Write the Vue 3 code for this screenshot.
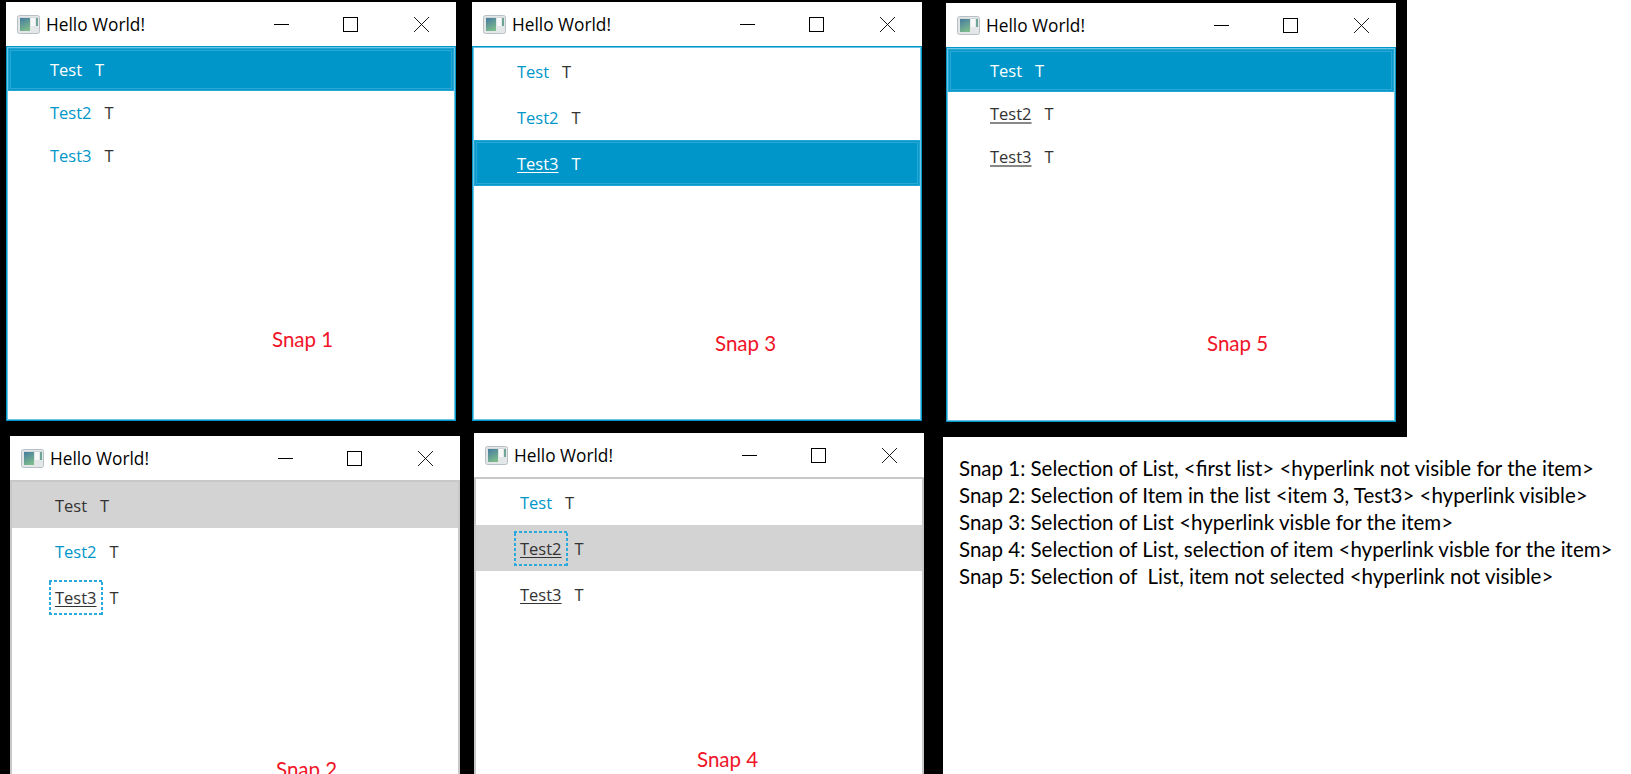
<template>
  <div class="page">
    <div class="corner"></div>

    <div
      v-for="win in windows"
      :key="win.snap"
      class="window"
      :style="{ left: win.x + 'px', top: win.y + 'px', height: win.h + 'px' }"
    >
      <div class="titlebar">
        <svg class="app-icon" width="23" height="19" viewBox="0 0 23 19">
          <defs>
            <linearGradient :id="'g' + win.snap" x1="0.2" y1="0" x2="0.6" y2="1">
              <stop offset="0" stop-color="#4a7f9f" />
              <stop offset="1" stop-color="#7dbb8c" />
            </linearGradient>
          </defs>
          <rect x="0.5" y="0.5" width="22" height="18" rx="2" fill="#e4e7e8" stroke="#b8c0c6" />
          <rect x="2" y="2" width="19" height="1" fill="#d3d8da" />
          <rect x="3" y="3" width="10" height="13" :fill="'url(#g' + win.snap + ')'" />
          <rect x="14" y="3" width="4" height="8" fill="#f7f8f8" />
          <rect x="19" y="3" width="2" height="8" fill="#6ea596" />
        </svg>
        <span class="title">Hello World!</span>
        <div class="controls">
          <span class="ctl">
            <svg width="15" height="15" viewBox="0 0 15 15"><path d="M0 7.5H15" stroke="#000" fill="none" /></svg>
          </span>
          <span class="ctl">
            <svg width="15" height="15" viewBox="0 0 15 15"><rect x="0.5" y="0.5" width="14" height="14" stroke="#000" fill="none" /></svg>
          </span>
          <span class="ctl">
            <svg width="15" height="15" viewBox="0 0 15 15"><path d="M0 0L15 15M15 0L0 15" stroke="#000" fill="none" stroke-width="0.9" /></svg>
          </span>
        </div>
      </div>

      <div class="list" :class="{ blurred: win.blurred }">
        <div
          v-for="row in win.rows"
          :key="row.text"
          class="row"
          :class="row.state"
          :style="{ height: win.rowH + 'px', paddingLeft: win.textX + 'px' }"
        >
          <span class="cell-link" :class="row.link">{{ row.text }}</span>
          <span class="cell-t">T</span>
        </div>
      </div>

      <span class="snap" :style="{ left: win.labelX + 'px', top: win.labelY + 'px' }">Snap {{ win.snap }}</span>
    </div>

    <div class="notes">
      <p v-for="line in notes" :key="line">{{ line }}</p>
    </div>
  </div>
</template>

<script setup>
const windows = [
  {
    snap: 1, x: 6, y: 2, h: 419, rowH: 43, textX: 42, labelX: 266, labelY: 325,
    rows: [
      { text: "Test", state: "selected", link: "plain" },
      { text: "Test2", link: "blue" },
      { text: "Test3", link: "blue" },
    ],
  },
  {
    snap: 3, x: 472, y: 2, h: 419, rowH: 46, textX: 43, labelX: 243, labelY: 329,
    rows: [
      { text: "Test", link: "blue" },
      { text: "Test2", link: "blue" },
      { text: "Test3", state: "selected", link: "under" },
    ],
  },
  {
    snap: 5, x: 946, y: 3, h: 419, rowH: 43, textX: 42, labelX: 261, labelY: 328,
    rows: [
      { text: "Test", state: "selected", link: "plain" },
      { text: "Test2", link: "under faint" },
      { text: "Test3", link: "under faint" },
    ],
  },
  {
    snap: 2, x: 10, y: 436, h: 419, rowH: 46, textX: 43, blurred: true, labelX: 266, labelY: 321,
    rows: [
      { text: "Test", state: "grey", link: "plain" },
      { text: "Test2", link: "blue" },
      { text: "Test3", link: "under focused" },
    ],
  },
  {
    snap: 4, x: 474, y: 433, h: 419, rowH: 46, textX: 44, blurred: true, labelX: 223, labelY: 314,
    rows: [
      { text: "Test", link: "blue" },
      { text: "Test2", state: "grey", link: "under focused" },
      { text: "Test3", link: "under" },
    ],
  },
];

const notes = [
  "Snap 1: Selection of List, <first list> <hyperlink not visible for the item>",
  "Snap 2: Selection of Item in the list <item 3, Test3> <hyperlink visible>",
  "Snap 3: Selection of List <hyperlink visble for the item>",
  "Snap 4: Selection of List, selection of item <hyperlink visble for the item>",
  "Snap 5: Selection of  List, item not selected <hyperlink not visible>",
];
</script>

<style>
html,
body {
  margin: 0;
  overflow: hidden;
  background: #000;
}
</style>

<style scoped>
.page {
  position: relative;
  width: 1631px;
  height: 774px;
  overflow: hidden;
  background: #000;
  font-family: "Open Sans", "Noto Sans", sans-serif;
}

/* pasted screenshots sit on a white sheet to the right */
.corner {
  position: absolute;
  left: 1407px;
  top: 0;
  right: 0;
  height: 437px;
  background: #fff;
}

.window {
  position: absolute;
  width: 450px;
  display: flex;
  flex-direction: column;
  background: #fff;
}

.titlebar {
  height: 44px;
  flex: none;
  display: flex;
  align-items: center;
  padding-left: 11px;
}

.app-icon {
  flex: none;
  margin-right: 6px;
}

.title {
  font-size: 17.3px;
  color: #000;
}

.controls {
  margin-left: auto;
  display: flex;
}

.ctl {
  width: 70px;
  height: 44px;
  display: flex;
  align-items: center;
  justify-content: center;
}

.ctl svg {
  display: block;
}

.ctl:nth-child(2) svg {
  margin-right: 1px;
}

.list {
  flex: 1;
  border: 1px solid #0096c9;
  padding: 1px;
  box-shadow: inset 0 0 0 1px #6cc4e4;
}

.list.blurred {
  border: 2px solid #c8c8c8;
  padding: 0;
  box-shadow: none;
}

.row {
  box-sizing: border-box;
  display: flex;
  align-items: center;
  font-size: 16.5px;
  color: #333;
}

.row.selected {
  background: #0096c9;
  color: #fff;
  box-shadow: inset 0 0 0 1px #22a6d4, inset 0 0 0 2px #0a98ca, inset 0 0 0 3px #2aa8d5;
}

.row.grey {
  background: #d3d3d3;
}

.cell-link {
  position: relative;
  margin-right: 13px;
}

.cell-link.blue {
  color: #0096c9;
}

.cell-link.under {
  text-decoration: underline;
  text-underline-offset: 2px;
}

.cell-link.faint {
  text-decoration-color: #888;
  text-decoration-thickness: 2px;
}

/* JavaFX focus box, 3px dash 2px gap */
.cell-link.focused::after {
  content: "";
  position: absolute;
  left: -6px;
  right: -6px;
  top: -6px;
  bottom: -6px;
  background:
    repeating-linear-gradient(90deg, #2aaadc 0 3px, transparent 3px 5px) top / 100% 2px no-repeat,
    repeating-linear-gradient(90deg, #2aaadc 0 3px, transparent 3px 5px) bottom / 100% 2px no-repeat,
    repeating-linear-gradient(0deg, #2aaadc 0 3px, transparent 3px 5px) left / 2px 100% no-repeat,
    repeating-linear-gradient(0deg, #2aaadc 0 3px, transparent 3px 5px) right / 2px 100% no-repeat;
}

.snap {
  position: absolute;
  font-family: Lato, "Open Sans", sans-serif;
  font-size: 20.5px;
  color: #f01428;
  white-space: nowrap;
}

.notes {
  position: absolute;
  left: 943px;
  top: 437px;
  right: 0;
  bottom: 0;
  padding: 18px 0 0 16px;
  background: #fff;
  font-family: Lato, "Open Sans", sans-serif;
  font-size: 20.5px;
  color: #000;
}

.notes p {
  margin: 0;
  height: 27px;
  line-height: 27px;
  white-space: pre;
}
</style>
